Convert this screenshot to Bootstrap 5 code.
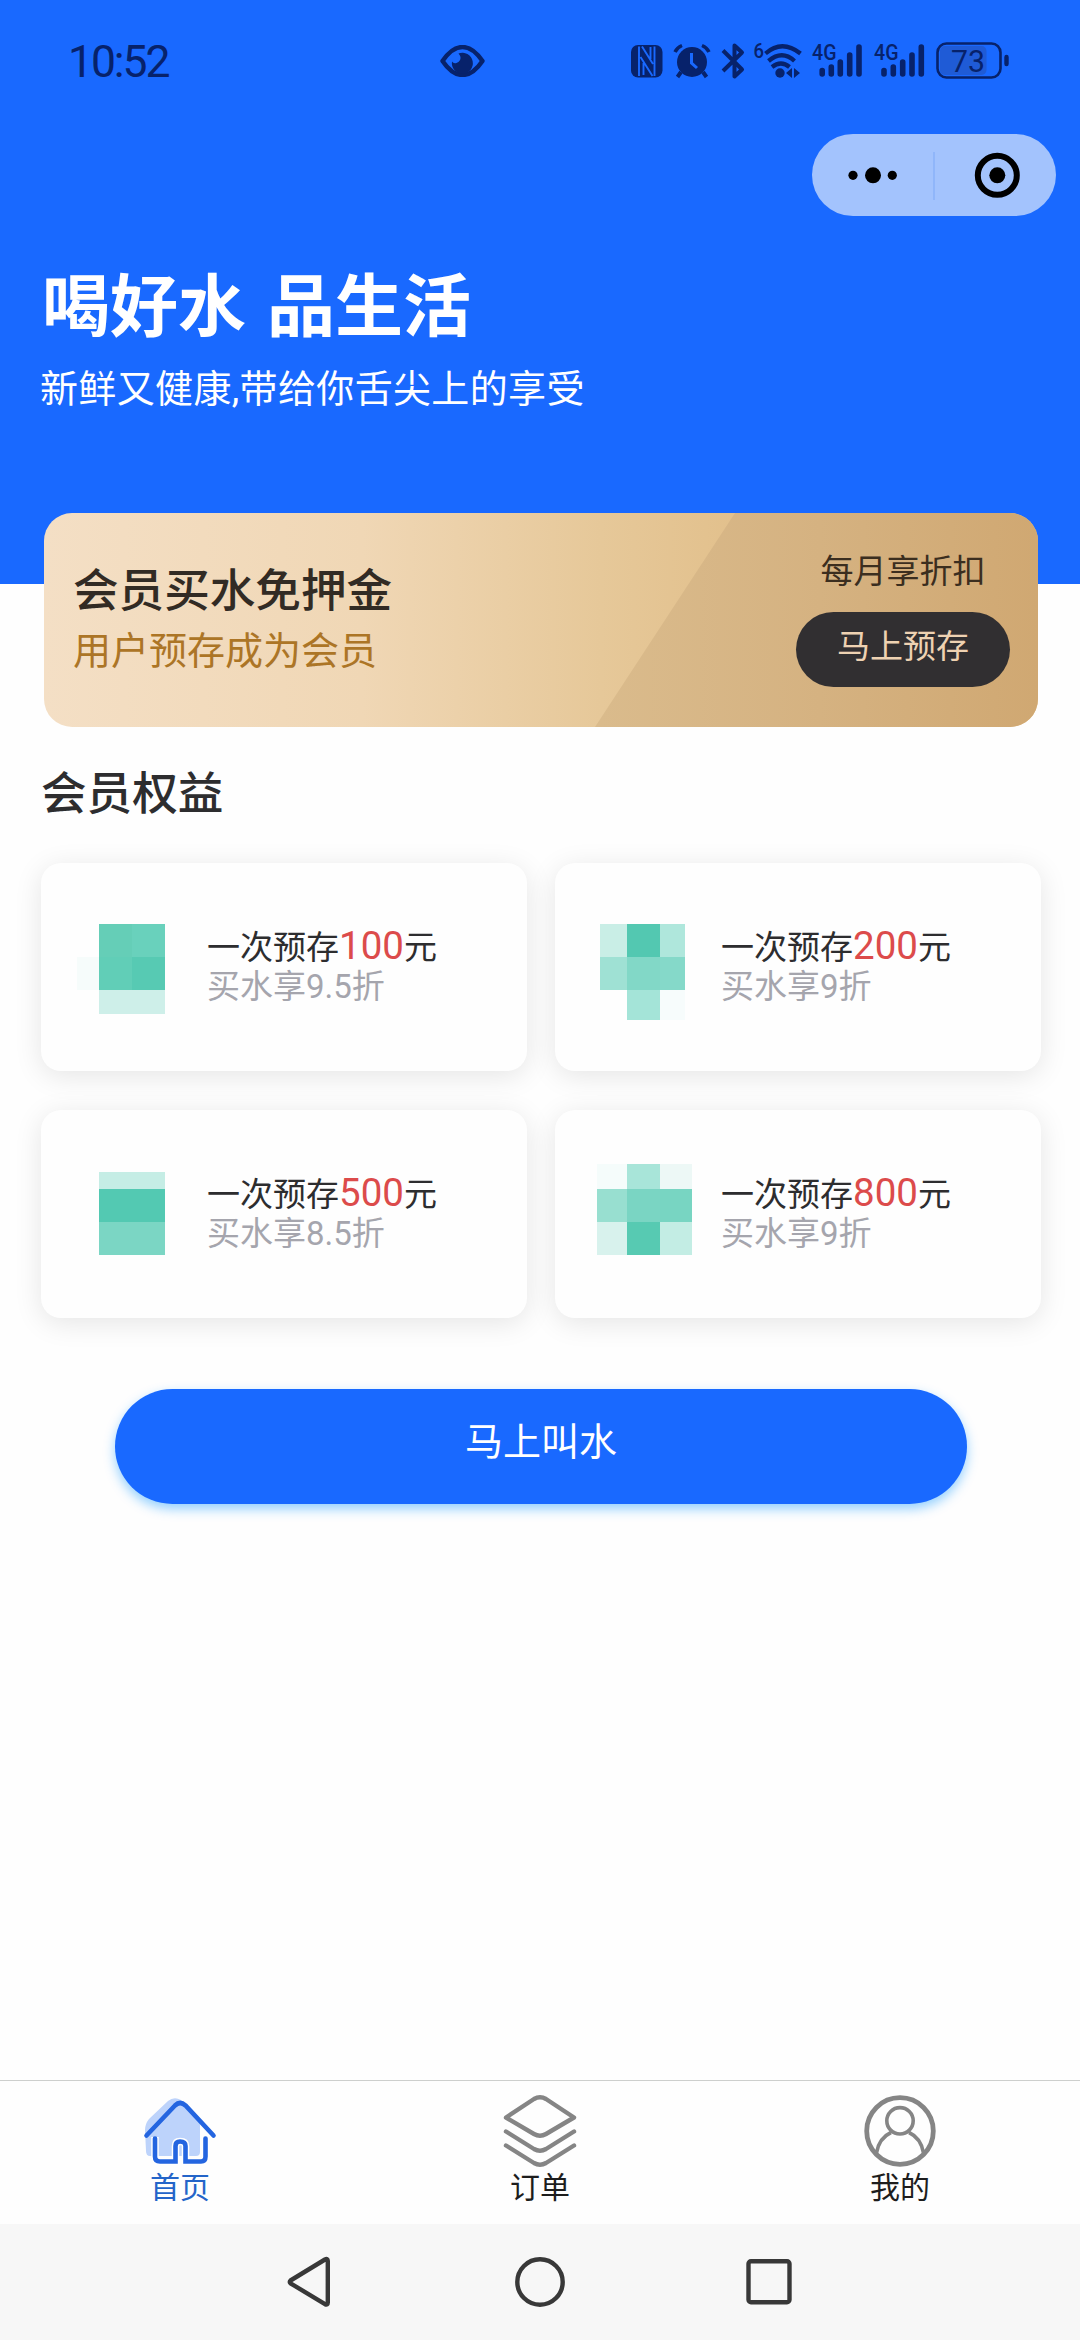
<!DOCTYPE html>
<html lang="zh-CN">
<head>
<meta charset="utf-8">
<meta name="viewport" content="width=device-width, initial-scale=1">
<title>会员买水</title>
<link href="https://cdn.jsdelivr.net/npm/bootstrap@5.3.0/dist/css/bootstrap.min.css" rel="stylesheet">
<script src="https://cdn.jsdelivr.net/npm/bootstrap@5.3.0/dist/js/bootstrap.bundle.min.js"></script>
<style>
  :root { --brand: #1969ff; --ink: #2d2d2f; --status: #07226b; }
  body { font-family: Roboto, "Noto Sans CJK SC", sans-serif; width: 1080px; height: 2340px; color: var(--ink); background: #fefefe; overflow: hidden; }
  svg { display: block; flex: none; }
  .hero { height: 584px; background: var(--brand); }
  .status-bar { height: 122px; padding: 0 71px 0 68px; color: var(--status); }
  .clock { width: 372px; font-size: 44.5px; line-height: 124px; letter-spacing: -2.1px; padding-top: 2px; }
  .capsule { width: 244px; height: 82px; margin: 12px 24px 0 auto; background: #a3c3fd; }
  .hero-title { margin: 50px 0 0 42px; font-size: 68px; line-height: 84px; font-weight: 700; word-spacing: 4px; }
  .hero-sub { margin: 11px 0 0 40px; font-size: 38px; line-height: 56px; letter-spacing: .35px; }
  .promo { height: 214px; margin: -71px 42px 0 44px; border-radius: 28px; overflow: hidden; padding: 0 28px 0 29px; background: linear-gradient(90deg, #f4dfc5 0%, #f0d7b5 32%, #e6c899 56%, #e2c08c 70%, #e2c08c 100%); position: relative; }
  .promo-shade { position: absolute; inset: 0; background: linear-gradient(90deg, #dabb8c 56%, #d5b281 78%, #d0a872 100%); clip-path: polygon(691px 0, 100% 0, 100% 100%, 551px 100%); }
  .promo > .promo-body { position: relative; }
  .promo-title { font-size: 45.6px; line-height: 60px; margin-top: 49px; font-weight: 500; color: #322b24; }
  .promo-sub { font-size: 38px; line-height: 50px; margin-top: 4px; color: #ac7526; }
  .promo-side { width: 214px; }
  .promo-note { font-size: 33px; line-height: 44px; margin-top: 37px; color: #3b2e1f; }
  .promo-btn { height: 75px; margin-top: 18px; background: #312f31; color: #eed2b2; font-size: 33px; line-height: 68px; padding: 0 0 6px; border: 0; }
  .promo-btn:hover { background: #312f31; color: #eed2b2; }
  .section-title { margin: 38px 0 0 41px; font-size: 45.6px; line-height: 60px; font-weight: 500; }
  .tier-grid { margin: 38px 39px 0 41px; display: grid; grid-template-columns: 486px 486px; column-gap: 28px; row-gap: 39px; }
  .tier { height: 208px; border: 0; border-radius: 20px; background: #fefefe; box-shadow: 0 5px 28px rgba(0,0,0,.1); }
  .tier svg { width: 166px; height: 208px; }
  .tier-text { padding-top: 62px; line-height: 41px; font-size: 33px; white-space: nowrap; }
  .tier-text b { font-size: 38.5px; font-weight: 400; color: #dc4b4b; line-height: 41px; }
  .tier-text .discount { color: #a5a5ad; }
  .tier-text div { height: 41px; }
  .order-btn, .order-btn:hover { width: 852px; height: 115px; margin: 71px 0 0 115px; background: var(--brand); color: #fff; font-size: 38px; line-height: 107px; padding: 0 0 8px; border: 0; box-shadow: 0 5px 12px rgba(0,145,255,.42); }
  .tab-bar { height: 144px; border-top: 1.5px solid #cdcfcd; padding-top: 12px; }
  .tab-bar a { color: #1d1d1d; font-size: 30px; line-height: 36px; text-decoration: none; }
  .tab-bar a.active { color: #2465c9; }
  .tab-bar svg { margin-bottom: 1px; }
  .system-nav { height: 116px; background: #f7f7f7; }
</style>
</head>
<body class="d-flex flex-column">

<header class="hero text-white">
  <div class="status-bar d-flex align-items-center">
    <div class="clock">10:52</div>
    <svg width="45" height="32" viewBox="0 0 45 32">
      <path d="M2.500 16Q12 2 22.500 2T42.500 16Q33 30 22.500 30T2.500 16Z" fill="none" stroke="currentColor" stroke-width="4.400" stroke-linejoin="round"/>
      <path d="M18.500 8.500A10.500 10.500 0 1 1 12 16.500Q13.500 19 16.500 18Q21 16 20.500 12Q20 10 18.500 8.500Z" fill="currentColor"/>
    </svg>
    <svg class="ms-auto" width="380" height="42" viewBox="629 39 380 42" fill="none" stroke="currentColor" font-family="Roboto, sans-serif">
      <!-- NFC -->
      <rect x="631" y="44" width="31.500" height="32.500" rx="7" fill="currentColor" stroke="none"/>
      <path d="M639 45.500V75M654.500 45.500V75M642 45.500L653 63M640.500 56L652.500 75M643.500 62V74M650.500 46V58" stroke="#1969ff" stroke-width="1.900"/>
      <!-- Alarm -->
      <circle cx="692" cy="61" r="15" fill="currentColor" stroke="none"/>
      <path d="M675 51Q677 46.500 682 44.500M702 44.500Q707 46.500 709 51" stroke-width="3.500"/>
      <path d="M681 71L677.500 76M703 71L706.500 76" stroke-width="4"/>
      <path d="M691.500 52V62L697 67" stroke="#1969ff" stroke-width="3"/>
      <!-- Bluetooth -->
      <path d="M723 49.500L742 68.500L734.500 75.500V44.500L742 51.500L723 70" stroke-width="4" stroke-linejoin="round"/>
      <!-- Wi-Fi -->
      <text x="753.500" y="57" font-size="21" font-weight="500" textLength="10.500" lengthAdjust="spacingAndGlyphs" fill="currentColor" stroke="none">6</text>
      <path d="M765.500 52.500Q782 38 800.500 52.500M768.500 60Q782 48.500 794.500 60M772 66Q781 59 789.500 66" stroke-width="4.300"/>
      <circle cx="780" cy="72" r="4.700" fill="currentColor" stroke="none"/>
      <path d="M786 72L792 67V77ZM794 67V77L800 72Z" fill="currentColor" stroke="none"/>
      <!-- Cellular -->
      <g stroke-width="5.600" stroke-linecap="round">
        <path d="M822.200 69.500V73M831.300 66V73M840.300 61V73M849.700 54V73M859 46V73"/>
        <path d="M884 69.500V73M893.300 66V73M902.700 61V73M912 54V73M921.300 46V73"/>
      </g>
      <g font-size="22" font-weight="500" fill="currentColor" stroke="none">
        <text x="812" y="59" textLength="24.500" lengthAdjust="spacingAndGlyphs">4G</text>
        <text x="874" y="59" textLength="24.500" lengthAdjust="spacingAndGlyphs">4G</text>
      </g>
      <!-- Battery -->
      <rect x="940" y="45" width="46.500" height="29" rx="5" fill="#1f5bd6" stroke="none"/>
      <rect x="937.500" y="42.500" width="63" height="34" rx="9" stroke-width="2.600"/>
      <path d="M1006.500 56V63" stroke-width="4.400" stroke-linecap="round"/>
      <text x="951" y="71" font-size="32" textLength="34" lengthAdjust="spacingAndGlyphs" fill="currentColor" stroke="none">73</text>
    </svg>
  </div>
  <div class="capsule rounded-pill">
    <svg width="244" height="82" viewBox="0 0 244 82" fill="#000">
      <circle cx="41" cy="41.300" r="4.600"/><circle cx="61" cy="41.300" r="8"/><circle cx="80.300" cy="41.300" r="4.600"/>
      <rect x="121.500" y="18" width="1" height="48" fill="#7fa9f8"/>
      <circle cx="185.300" cy="41.300" r="8"/>
      <circle cx="185.300" cy="41.300" r="19.500" fill="none" stroke="#000" stroke-width="6"/>
    </svg>
  </div>
  <h1 class="hero-title mb-0">喝好水 品生活</h1>
  <p class="hero-sub mb-0">新鲜又健康,带给你舌尖上的享受</p>
</header>

<section class="promo flex-shrink-0">
  <div class="promo-shade"></div>
  <div class="promo-body d-flex justify-content-between">
    <div>
      <h2 class="promo-title mb-0">会员买水免押金</h2>
      <p class="promo-sub mb-0">用户预存成为会员</p>
    </div>
    <div class="promo-side text-center">
      <p class="promo-note mb-0">每月享折扣</p>
      <button type="button" class="btn promo-btn rounded-pill w-100 d-block">马上预存</button>
    </div>
  </div>
</section>

<main class="flex-grow-1">
  <h2 class="section-title mb-0">会员权益</h2>
  <div class="tier-grid">
    <div class="card tier flex-row">
      <svg viewBox="0 0 166 208" shape-rendering="crispEdges">
        <path d="M36 94h22v33H36z" fill="#f6fcfb"/>
        <path d="M58 61h33v33H58z" fill="#65ceb7"/><path d="M91 61h33v33H91z" fill="#69d1bc"/>
        <path d="M58 94h33v33H58z" fill="#61ceb7"/><path d="M91 94h33v33H91z" fill="#57cab3"/>
        <path d="M58 127h66v24H58z" fill="#ceefe9"/>
      </svg>
      <div class="tier-text"><div>一次预存<b>100</b>元</div><div class="discount">买水享9.5折</div></div>
    </div>
    <div class="card tier flex-row">
      <svg viewBox="0 0 166 208" shape-rendering="crispEdges">
        <path d="M45 61h27v33H45z" fill="#c9eee6"/><path d="M72 61h33v33H72z" fill="#53c8b1"/><path d="M105 61h25v33h-25z" fill="#afe7dc"/>
        <path d="M45 94h27v33H45z" fill="#9fe1d4"/><path d="M72 94h33v33H72z" fill="#82d8c7"/><path d="M105 94h25v33h-25z" fill="#85d9c9"/>
        <path d="M72 127h33v30H72z" fill="#a4e4d8"/><path d="M105 127h25v30h-25z" fill="#f7fcfc"/>
      </svg>
      <div class="tier-text"><div>一次预存<b>200</b>元</div><div class="discount">买水享9折</div></div>
    </div>
    <div class="card tier flex-row">
      <svg viewBox="0 0 166 208" shape-rendering="crispEdges">
        <path d="M58 62h66v17H58z" fill="#c5ede5"/>
        <path d="M58 79h66v33H58z" fill="#53c9b2"/>
        <path d="M58 112h66v33H58z" fill="#7bd6c4"/>
      </svg>
      <div class="tier-text"><div>一次预存<b>500</b>元</div><div class="discount">买水享8.5折</div></div>
    </div>
    <div class="card tier flex-row">
      <svg viewBox="0 0 166 208" shape-rendering="crispEdges">
        <path d="M42 54h30v25H42z" fill="#f5fcfb"/><path d="M72 54h33v25H72z" fill="#a8e5d9"/><path d="M105 54h32v25h-32z" fill="#edf8f6"/>
        <path d="M42 79h30v33H42z" fill="#98dfd0"/><path d="M72 79h33v33H72z" fill="#7ad5c3"/><path d="M105 79h32v33h-32z" fill="#78d5c2"/>
        <path d="M42 112h30v33H42z" fill="#d8f2ed"/><path d="M72 112h33v33H72z" fill="#57cab2"/><path d="M105 112h32v33h-32z" fill="#c3ede4"/>
      </svg>
      <div class="tier-text"><div>一次预存<b>800</b>元</div><div class="discount">买水享9折</div></div>
    </div>
  </div>
  <button type="button" class="btn order-btn rounded-pill d-block">马上叫水</button>
</main>

<nav class="tab-bar d-flex flex-shrink-0">
  <a href="#" class="active d-flex flex-column align-items-center flex-fill w-100">
    <svg width="76" height="76" viewBox="142 2093 76 76">
      <path d="M145 2130Q145 2124 149 2119L168 2101Q174 2096 181 2100L200 2119V2152Q200 2156 196 2156H150Q146 2156 146 2151Z" fill="#bdd3fb"/>
      <path d="M155 2137V2158Q155 2161.500 158.500 2161.500H175.500V2146Q175.500 2141.500 180 2141.500Q185.500 2141.500 185.500 2146V2161.500H202.500Q205.500 2161.500 205.500 2158V2137" fill="none" stroke="#fff" stroke-width="7.500"/>
      <g fill="none" stroke="#2465e0" stroke-width="4.600" stroke-linecap="round">
        <path d="M146.500 2135.500L175 2105.500Q180 2100.500 185.500 2105.500L213.500 2135.500"/>
        <path d="M155 2138.500V2156.500Q155 2161.500 160 2161.500H175.500V2146Q175.500 2141.500 180 2141.500Q185.500 2141.500 185.500 2146V2161.500H201Q205.500 2161.500 205.500 2156.500V2138.500"/>
      </g>
    </svg>
    首页
  </a>
  <a href="#" class="d-flex flex-column align-items-center flex-fill w-100">
    <svg width="76" height="76" viewBox="502 2093 76 76" fill="none" stroke="#858585" stroke-width="4.400" stroke-linecap="round" stroke-linejoin="round">
      <path d="M506 2117.500L534 2099Q540 2095.500 546 2099L574 2117.500L546 2134Q540 2137.500 534 2134Z"/>
      <path d="M506 2131.500L534 2149Q540 2152.500 546 2149L574 2131.500M506 2145.500L534 2163Q540 2166.500 546 2163L574 2145.500"/>
    </svg>
    订单
  </a>
  <a href="#" class="d-flex flex-column align-items-center flex-fill w-100">
    <svg width="76" height="76" viewBox="862 2093 76 76" fill="none" stroke="#858585">
      <circle cx="900" cy="2131" r="33.300" stroke-width="4.800"/>
      <circle cx="900" cy="2120.800" r="13.200" stroke-width="3.600"/>
      <path d="M876.500 2153Q879 2138 891 2132.500M909 2132.500Q921 2138 923.500 2153" stroke-width="3.600"/>
    </svg>
    我的
  </a>
</nav>

<footer class="system-nav flex-shrink-0">
  <svg width="1080" height="116" viewBox="0 2224 1080 116" fill="none" stroke="#383838" stroke-width="4.400" stroke-linejoin="round">
    <path d="M290.500 2280.500Q289 2282 290.500 2283.300L325 2304.200Q327.800 2305.500 327.800 2302.500V2261Q327.800 2258 325 2259.500Z"/>
    <circle cx="540" cy="2282" r="22.700"/>
    <rect x="748.500" y="2261.300" width="41" height="41" rx="2.500"/>
  </svg>
</footer>
</body>
</html>
